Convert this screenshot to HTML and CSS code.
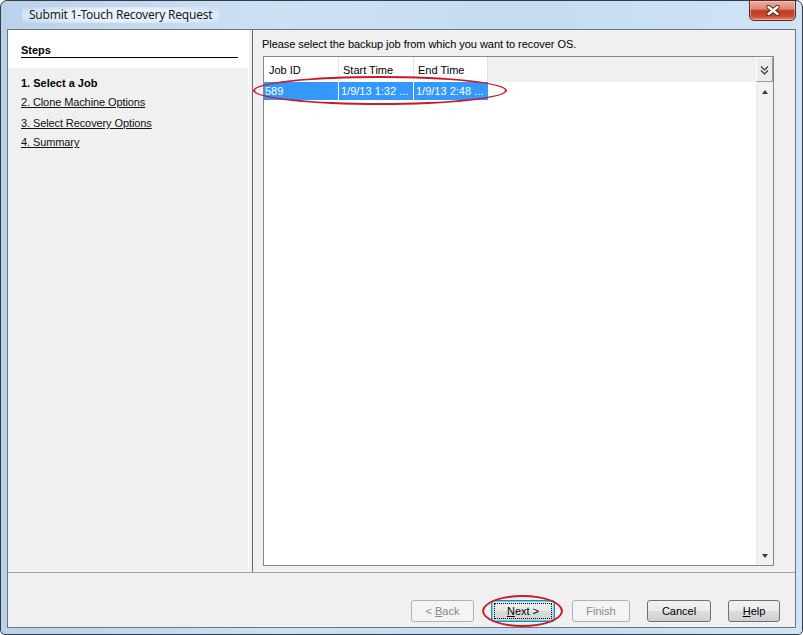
FILE: index.html
```html
<!DOCTYPE html>
<html lang="en">
<head>
    <meta charset="UTF-8">
    <title>Submit 1-Touch Recovery Request</title>
    <link rel="stylesheet" href="styles.css">
</head>
<body>
    <div class="window">
        <div class="titlebar">
            <span class="title">Submit 1-Touch Recovery Request</span>
            <button class="close-btn" type="button">
                <svg width="14" height="11" viewBox="0 0 14 11">
                    <path d="M2.5 2 L11.5 9 M11.5 2 L2.5 9" stroke="#4a241d" stroke-width="4.2" stroke-linecap="round"/>
                    <path d="M2.5 2 L11.5 9 M11.5 2 L2.5 9" stroke="#fff" stroke-width="2.4" stroke-linecap="round"/>
                </svg>
            </button>
        </div>

        <div class="client">
            <div class="main">
                <aside class="steps">
                    <div class="steps-head">
                        <h3>Steps</h3>
                    </div>
                    <ul class="step-list">
                        <li class="current">1. Select a Job</li>
                        <li><a href="#">2. Clone Machine Options</a></li>
                        <li><a href="#">3. Select Recovery Options</a></li>
                        <li><a href="#">4. Summary</a></li>
                    </ul>
                </aside>

                <div class="splitter"></div>

                <section class="page">
                    <p class="prompt">Please select the backup job from which you want to recover OS.</p>
                    <div class="grid">
                        <div class="grid-head">
                            <div class="cell c-id">Job ID</div>
                            <div class="cell c-start">Start Time</div>
                            <div class="cell c-end">End Time</div>
                            <div class="head-fill"></div>
                            <div class="col-chooser">
                                <svg width="9" height="10" viewBox="0 0 9 10">
                                    <path d="M1 1.5 L4.5 5 L8 1.5 M1 5.5 L4.5 9 L8 5.5" fill="none" stroke="#333" stroke-width="1.2"/>
                                </svg>
                            </div>
                        </div>
                        <div class="grid-body">
                            <div class="rows">
                                <div class="row selected">
                                    <div class="cell c-id">589</div>
                                    <div class="cell c-start">1/9/13 1:32 ...</div>
                                    <div class="cell c-end">1/9/13 2:48 ...</div>
                                </div>
                            </div>
                            <div class="vscroll">
                                <span class="arrow up"></span>
                                <span class="arrow down"></span>
                            </div>
                        </div>
                    </div>
                </section>
            </div>

            <div class="buttons">
                <button class="btn btn-back" type="button" disabled>&lt; <u>B</u>ack</button>
                <button class="btn btn-next default" type="button"><span><u>N</u>ext &gt;</span></button>
                <button class="btn btn-finish" type="button" disabled>Finish</button>
                <button class="btn btn-cancel" type="button">Cancel</button>
                <button class="btn btn-help" type="button"><u>H</u>elp</button>
            </div>
        </div>

        <!-- red call-outs drawn over the dialog -->
        <span class="mark mark-row"></span>
        <span class="mark mark-next"></span>
    </div>
</body>
</html>
```

FILE: styles.css
```css
body {
    margin: 0;
    font-family: "Liberation Sans", Arial, sans-serif;
    font-size: 11px;
    color: #000;
    background: #fff;
}

/* window frame */
.window {
    position: relative;
    width: 803px;
    height: 635px;
    box-sizing: border-box;
    border: 1px solid #363b41;
    border-radius: 7px 7px 5px 5px;
    padding: 0 6px 6px;
    background: linear-gradient(to right, #b9d1ea 0%, #cde1f5 35%, #c4dbf2 65%, #d0e4f7 100%);
    display: flex;
    flex-direction: column;
}
.titlebar {
    height: 28px;
    flex-shrink: 0;
    display: flex;
    align-items: flex-start;
    justify-content: space-between;
}
.title {
    margin: 6px 0 0 15px;
    padding: 0 7px;
    font-family: "Noto Sans", "Open Sans", sans-serif;
    font-size: 12px;
    letter-spacing: -0.22px;
    line-height: 16px;
    color: #1b1b1b;
    background: radial-gradient(ellipse at center, rgba(234, 243, 251, 0.95) 50%, rgba(234, 243, 251, 0) 100%);
}
.close-btn {
    width: 47px;
    height: 21px;
    margin-top: -1px;
    padding: 0;
    border: 1px solid #5c2720;
    border-radius: 0 0 5px 5px;
    background: linear-gradient(#eab0a3 0%, #dc8a77 40%, #c43a20 52%, #c84a30 80%, #e38d70 100%);
    box-shadow: inset 0 0 0 1px rgba(255, 220, 210, 0.45);
    display: flex;
    align-items: center;
    justify-content: center;
}

/* dialog body */
.client {
    flex: 1;
    min-height: 0;
    border: 1px solid #6e747a;
    background: #f0f0f0;
    display: flex;
    flex-direction: column;
}
.main {
    flex: 1;
    min-height: 0;
    display: flex;
}

/* wizard steps */
.steps {
    width: 240px;
    flex-shrink: 0;
}
.steps-head {
    background: #fff;
    padding: 13px 10px 0 13px;
    height: 38px;
    box-sizing: border-box;
}
.steps-head h3 {
    margin: 0;
    font-size: 11px;
    line-height: 14px;
    border-bottom: 1px solid #000;
}
.step-list {
    list-style: none;
    margin: 0;
    padding: 7px 0 0 13px;
}
.step-list li {
    line-height: 16px;
    margin-bottom: 3px;
}
.step-list li:nth-child(2) {
    margin-bottom: 5px;
}
.step-list .current {
    font-weight: bold;
}
.step-list a {
    color: #111;
    text-decoration: underline;
    letter-spacing: -0.1px;
}
.splitter {
    width: 3px;
    flex-shrink: 0;
    border-left: 1px solid #fff;
    border-right: 1px solid #6a6a6a;
}

/* job picker */
.page {
    flex: 1;
    display: flex;
    flex-direction: column;
    padding: 7px 21px 6px 9px;
}
.prompt {
    margin: 0 0 5px;
    line-height: 14px;
    letter-spacing: -0.05px;
}
.grid {
    flex: 1;
    margin-left: 1px;
    border: 1px solid #828790;
    display: flex;
    flex-direction: column;
    background: #fff;
}
.grid-head {
    height: 25px;
    display: flex;
    background: #f0f0f0;
}
.cell {
    box-sizing: border-box;
    padding-left: 4px;
    white-space: nowrap;
    overflow: hidden;
}
.grid-head .cell {
    background: #fff;
    border-right: 1px solid #e3e3e3;
    line-height: 26px;
}
.c-id {
    width: 75px;
    padding-left: 5px;
}
.c-start {
    width: 75px;
}
.c-end {
    width: 74px;
}
.head-fill {
    flex: 1;
}
.col-chooser {
    width: 17px;
    box-sizing: border-box;
    border-left: 1px solid #fff;
    border-top: 1px solid #fff;
    border-right: 1px solid #9a9a9a;
    border-bottom: 1px solid #9a9a9a;
    background: #ececec;
    display: flex;
    align-items: center;
    justify-content: center;
}
.grid-body {
    flex: 1;
    display: flex;
}
.rows {
    flex: 1;
}
.row {
    display: flex;
    height: 18px;
    line-height: 18px;
}
.row.selected {
    color: #fff;
}
.row.selected .cell {
    background: #3399ff;
    border-right: 1px solid #fff;
    padding-left: 2px;
}
.row.selected .c-id {
    padding-left: 1px;
}
.row.selected .c-end {
    border-right: none;
}
.vscroll {
    width: 17px;
    box-sizing: border-box;
    border-left: 1px solid #e6e6e6;
    background: #f2f2f2;
    display: flex;
    flex-direction: column;
    justify-content: space-between;
    align-items: center;
    padding: 8px 0 7px;
}
.arrow {
    width: 0;
    height: 0;
    border-left: 3.5px solid transparent;
    border-right: 3.5px solid transparent;
}
.arrow.up {
    border-bottom: 4px solid #3c3c3c;
}
.arrow.down {
    border-top: 4px solid #3c3c3c;
}

/* command buttons */
.buttons {
    height: 55px;
    flex-shrink: 0;
    box-sizing: border-box;
    border-top: 1px solid #a0a0a0;
    padding: 27px 15px 0 0;
    display: flex;
    justify-content: flex-end;
    align-items: flex-start;
    gap: 17px;
}
.btn {
    height: 22px;
    box-sizing: border-box;
    padding: 0;
    border: 1px solid #707070;
    border-radius: 3px;
    background: linear-gradient(#f2f2f2 0%, #ebebeb 48%, #dddddd 52%, #cfcfcf 100%);
    font-family: "Liberation Sans", Arial, sans-serif;
    font-size: 11px;
    color: #000;
}
.btn:disabled {
    border-color: #adb2b5;
    background: #f4f4f4;
    color: #8a8a8a;
}
.btn.default {
    position: relative;
    border-color: #3c7fb1;
    box-shadow: inset 0 0 0 1px #4fd6fb;
    background: linear-gradient(#f0f0f0 0%, #e8e8e8 48%, #dcdcdc 52%, #d2d2d2 100%);
}
.btn.default span {
    position: absolute;
    inset: 2px;
    border: 1px dotted #000;
    display: flex;
    align-items: center;
    justify-content: center;
}
.btn-back { width: 63px; }
.btn-next { width: 64px; }
.btn-finish { width: 58px; }
.btn-cancel { width: 64px; }
.btn-help { width: 52px; }

/* red call-out rings */
.mark {
    position: absolute;
    box-sizing: border-box;
    border: 2px solid #cc1a24;
    border-radius: 50%;
    pointer-events: none;
}
.mark-row {
    left: 252px;
    top: 75px;
    width: 254px;
    height: 29px;
}
.mark-next {
    left: 481px;
    top: 594px;
    width: 81px;
    height: 32px;
}
```
